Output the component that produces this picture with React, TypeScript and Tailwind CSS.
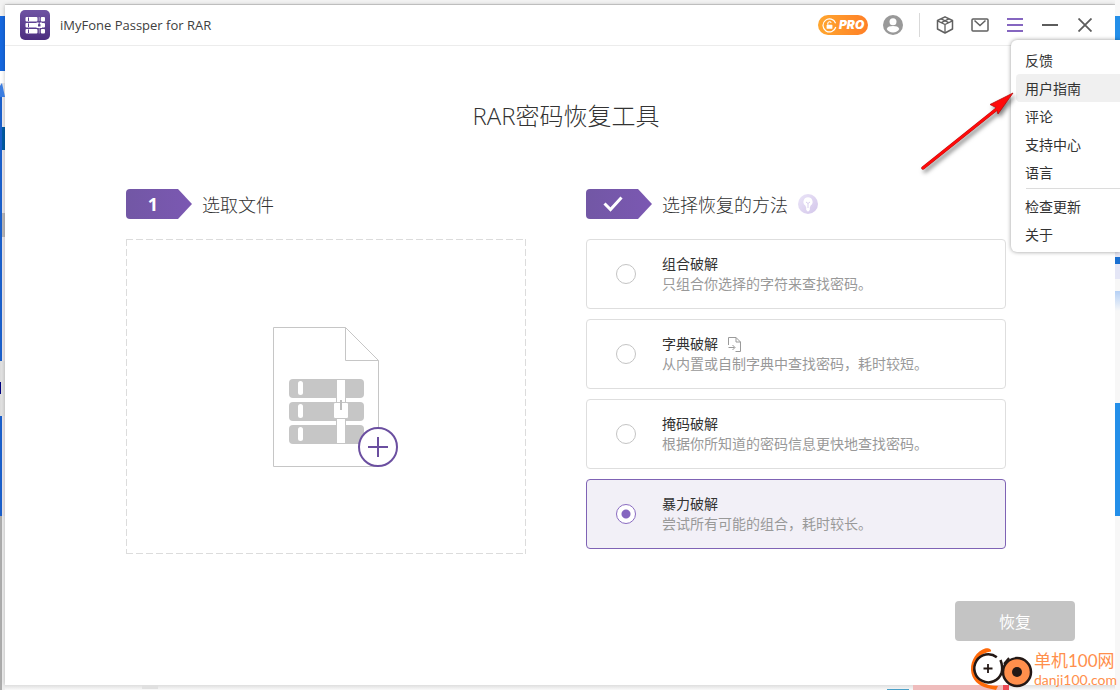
import { useState, type ReactNode } from "react";

type Method = { id: string; title: string; desc: string; importable?: boolean };

const methods: Method[] = [
  { id: "combo", title: "组合破解", desc: "只组合你选择的字符来查找密码。" },
  { id: "dict", title: "字典破解", desc: "从内置或自制字典中查找密码，耗时较短。", importable: true },
  { id: "mask", title: "掩码破解", desc: "根据你所知道的密码信息更快地查找密码。" },
  { id: "brute", title: "暴力破解", desc: "尝试所有可能的组合，耗时较长。" },
];

function AppLogo() {
  return (
    <svg width="30" height="30" viewBox="0 0 30 30" aria-hidden="true">
      <defs>
        <linearGradient id="logoBg" x1="0" y1="0" x2="0" y2="1">
          <stop offset="0" stopColor="#6f53a3" />
          <stop offset="1" stopColor="#4b2d7f" />
        </linearGradient>
      </defs>
      <rect width="30" height="30" rx="5" fill="url(#logoBg)" />
      <g fill="#fff">
        {[7, 13, 19].map((y) => (
          <g key={y}>
            <rect x="5.5" y={y} width="12" height="4.400" rx="1" />
            <rect x="20.800" y={y} width="4.200" height="4.400" rx="1" />
            <rect x="8" y={y + 0.4} width="1" height="3.600" fill="#5c4091" />
          </g>
        ))}
      </g>
      <path d="M16.500 12.500h5.500v5.500h-5.500z" fill="#fff" />
      <path d="M18 14.200h2.500v2.300H18z" fill="#5c4091" />
      <path d="M18.700 12h1v3h-1z" fill="#5c4091" />
      <path d="M18.700 18h1v5.400h-1zM18.700 7h1v4h-1z" fill="#fff" opacity="0.5" />
    </svg>
  );
}

function ToolButton({ label, children, onClick, expanded }: { label: string; children: ReactNode; onClick?: () => void; expanded?: boolean }) {
  return (
    <button type="button" aria-label={label} aria-expanded={expanded} onClick={onClick} className="flex h-10 w-[35px] items-center justify-center">
      {children}
    </button>
  );
}

function Header({ menuOpen, onMenu }: { menuOpen: boolean; onMenu: () => void }) {
  return (
    <header className="flex h-[41px] items-center border-b border-[#ececec] pr-[13px] pl-[15px]">
      <AppLogo />
      <h1 className="ml-2.5 pt-0.5 text-[13px] text-[#404040]">iMyFone Passper for RAR</h1>
      <div className="ml-auto flex items-center">
        <button type="button" aria-label="升级" className="flex h-5 w-[50px] items-center gap-0.5 rounded-full bg-linear-to-r from-[#ffa62e] to-[#ff7f27] pl-1">
          <svg width="15" height="15" viewBox="0 0 15 15" aria-hidden="true">
            <path d="M13.6 5.2A6.5 6.5 0 1 0 13.8 9" fill="none" stroke="#fff" strokeWidth="1.2" />
            <rect x="4.6" y="6.8" width="5.8" height="4" rx="0.6" fill="#fff" />
            <path d="M5.8 6.8V5.4a1.8 1.8 0 0 1 3.4-.6" fill="none" stroke="#fff" strokeWidth="1.1" />
          </svg>
          <span className="font-['Inter',sans-serif] text-xs font-black text-white italic">PRO</span>
        </button>
        <button type="button" aria-label="账户" className="ml-[15px]">
          <svg width="20" height="20" viewBox="0 0 20 20" className="block" aria-hidden="true">
            <circle cx="10" cy="10" r="10" fill="#999" />
            <circle cx="10" cy="6.800" r="3.500" fill="#fff" />
            <path d="M3.700 14c.8-2.400 3.200-3 6.300-3s5.500.600 6.300 3C15.200 16.300 12.800 17.500 10 17.500S4.800 16.300 3.700 14Z" fill="#fff" />
          </svg>
        </button>
        <span className="mr-[7px] ml-4 h-6 w-px bg-[#d9d9d9]" />
        <ToolButton label="产品">
          <svg width="18" height="20" viewBox="0 0 18 20" fill="none" stroke="#606060" strokeWidth="1.5" strokeLinejoin="round" aria-hidden="true">
            <path d="M9 1.800 16.500 5.500v8.500L9 18 1.500 14V5.500Z" />
            <path d="M1.500 5.800 9 9.500l7.500-3.700M9 9.500V18M5.200 3.800 12.700 7.600M12.800 3.800 5.300 7.600" strokeWidth="1.300" />
          </svg>
        </ToolButton>
        <ToolButton label="邮件">
          <svg width="18" height="14" viewBox="0 0 18 14" fill="none" stroke="#606060" strokeWidth="1.5" aria-hidden="true">
            <rect x="1" y="1" width="16" height="12" rx="1" />
            <path d="m3.500 2.500 5.500 5 5.500-5" />
          </svg>
        </ToolButton>
        <ToolButton label="菜单" onClick={onMenu} expanded={menuOpen}>
          <svg width="16" height="14" viewBox="0 0 16 14" fill="#8566c0" aria-hidden="true">
            <path d="M0 0h16v2H0zM0 6h16v2H0zM0 12h16v2H0z" />
          </svg>
        </ToolButton>
        <ToolButton label="最小化">
          <svg width="16" height="2" viewBox="0 0 16 2" aria-hidden="true">
            <path d="M0 0h16v2H0z" fill="#5c5c5c" />
          </svg>
        </ToolButton>
        <ToolButton label="关闭">
          <svg width="14" height="14" viewBox="0 0 14 14" stroke="#5c5c5c" strokeWidth="1.800" aria-hidden="true">
            <path d="m.5.500 13 13M13.500.500l-13 13" />
          </svg>
        </ToolButton>
      </div>
    </header>
  );
}

function StepTitle({ badge, children }: { badge: ReactNode; children: ReactNode }) {
  return (
    <div className="flex h-[30px] items-center gap-2.5">
      <span className="flex h-[30px] w-[66px] items-center justify-center rounded-sm bg-linear-to-r from-[#7257a5] to-[#7b58b2] pr-3 text-lg font-bold text-white [clip-path:polygon(0_0,52px_0,100%_50%,52px_100%,0_100%)]">
        {badge}
      </span>
      {children}
    </div>
  );
}

function DropIcon() {
  return (
    <svg width="146" height="142" viewBox="0 0 146 142" aria-hidden="true">
      <path d="M20.500 1.500h72l33 33v106h-105ZM92.500 1.500v33h33" fill="#fff" stroke="#c6c6c6" />
      {[53, 76, 99].map((y) => (
        <g key={y}>
          <rect x="36" y={y} width="75" height="19" rx="4" fill="#c6c6c6" />
          <rect x="45" y={y + 2} width="5" height="14" rx="2.500" fill="#fff" />
        </g>
      ))}
      <rect x="83.500" y="53.500" width="9" height="64" fill="#fff" stroke="#c6c6c6" />
      <rect x="80.500" y="76.500" width="15" height="16" rx="1.500" fill="#fff" stroke="#c6c6c6" />
      <rect x="87" y="74" width="2" height="10" fill="#bdbdbd" />
      <circle cx="125" cy="121" r="19" fill="#fff" stroke="#6b4fa0" strokeWidth="2" />
      <path d="M115 121h20M125 111v20" stroke="#6b4fa0" strokeWidth="2" />
    </svg>
  );
}

function MethodCard({ method, checked, onSelect }: { method: Method; checked: boolean; onSelect: () => void }) {
  return (
    <label className="flex h-[70px] items-center gap-[26px] rounded-[4px] border border-[#dedede] bg-white pl-[29px] text-sm/5 has-checked:border-[#7f63b5] has-checked:bg-[#f2f0f7]">
      <input
        type="radio"
        name="method"
        checked={checked}
        onChange={onSelect}
        className="size-5 shrink-0 appearance-none rounded-full border border-[#c4c4c4] bg-white checked:border-[#8a6bc1] checked:bg-[radial-gradient(circle,#8566c0_4px,#fff_5px)]"
      />
      <span className="flex flex-col">
        <span className="flex items-center gap-2.5 text-[#333]">
          {method.title}
          {method.importable && (
            <svg width="13" height="15" viewBox="0 0 13 15" fill="none" stroke="#9a9a9a" aria-hidden="true">
              <path d="M.5 8V.500h7.500L12.500 5v9.500H7.500M8 .500V5h4.500M.5 10.500h6M4.500 8l2.500 2.500L4.500 13" />
            </svg>
          )}
        </span>
        <span className="text-[#999]">{method.desc}</span>
      </span>
    </label>
  );
}

function Menu() {
  const item = "flex h-7 w-full items-center rounded-l-[4px] pt-0.5 pl-[9px] text-left hover:bg-[#f0f0f0]";
  return (
    <nav className="absolute top-10 right-0 w-[109px] rounded-l-[6px] bg-white pt-1.5 pb-1 pl-[5px] text-sm text-[#333] shadow-[0_0_4px_rgba(0,0,0,0.4)]">
      <button type="button" className={item}>反馈</button>
      <button type="button" className="flex h-7 w-full items-center rounded-l-[4px] bg-[#f0f0f0] pt-0.5 pl-[9px] text-left">用户指南</button>
      <button type="button" className={item}>评论</button>
      <button type="button" className={item}>支持中心</button>
      <button type="button" className={item}>语言</button>
      <hr className="mt-0.5 mb-[3px] ml-2.5 border-[#dcdcdc]" />
      <button type="button" className={item}>检查更新</button>
      <button type="button" className={item}>关于</button>
    </nav>
  );
}

function Watermark() {
  return (
    <div className="absolute right-[3px] bottom-0 flex items-end font-['Lato','Noto_Sans_CJK_SC',sans-serif] text-[#ff8f4c]">
      <svg width="64" height="43" viewBox="0 0 64 43" aria-hidden="true">
        <path d="M21 4.500C22 2 18 .500 15 1.500 7 4 .500 13 1 23c.500 10 8 16 16 18l9 2 2-4C15 39 5 33 4.500 22.500 4 13 11 5.500 21 4.500Z" fill="#ff6a0a" />
        <path d="M26.800 10.200A14 14 0 1 0 31.500 26" fill="#fff" stroke="#231815" strokeWidth="2.500" />
        <path d="M31.500 26c1.500-5 .500-9-1-13" fill="none" stroke="#231815" strokeWidth="2.500" />
        <path d="M13.500 21.500h9M18 17v9" stroke="#231815" strokeWidth="1.800" />
        <circle cx="47" cy="25" r="14" fill="#ff8f4c" stroke="#231815" strokeWidth="2.500" />
        <circle cx="47" cy="25" r="5" fill="#231815" />
        <path d="M35 14c3-3 6-4.500 10-5" stroke="#fff" strokeWidth="2.500" fill="none" />
        <path d="m34 17 5-6" stroke="#231815" strokeWidth="2" />
      </svg>
      <div className="flex flex-col pb-0.5">
        <span className="text-[17px]/5">单机100网</span>
        <span className="text-sm/[17px]">danji100.com</span>
      </div>
    </div>
  );
}

function LeftEdge() {
  return (
    <div className="flex w-[5px] shrink-0 flex-col bg-[#ececef]" aria-hidden="true">
      <i className="h-4 bg-[#f2f2f2]" />
      <i className="h-[55px] bg-[#1668df]" />
      <i className="h-3 bg-white" />
      <i className="h-3.5 bg-[#3b7de0] [clip-path:polygon(0_20%,40%_0,100%_100%,0_100%)]" />
      <i className="h-[30px] border-l-2 border-[#1b60cb] bg-[#efecef]" />
      <i className="h-[23px] border-l-2 border-[#1b60cb] bg-[#005da6]" />
      <i className="h-[63px] border-l-2 border-[#1b60cb] bg-[#ebe7eb]" />
      <i className="h-6 border-l-2 border-[#1b60cb] bg-[#bcb9bc]" />
      <i className="h-[124px] border-l-2 border-[#1b60cb] bg-[#ebe7eb]" />
      <i className="h-[21px] border-l border-[#ddd] bg-[#e2e2e2]" />
      <i className="h-3 border-l border-[#000080] bg-[#e2e2e2]" />
      <i className="h-[22px] border-l border-[#ddd] bg-[#e2e2e2]" />
      <i className="h-[100px] border-l-2 border-[#1b60cb] bg-[#ebe7eb]" />
      <i className="flex-1 border-l-2 border-[#acacac] bg-[#eee]" />
    </div>
  );
}

function RightEdge() {
  return (
    <div className="flex w-[5px] shrink-0 flex-col bg-[#f7f7f7]" aria-hidden="true">
      <i className="h-4" />
      <i className="h-[100px] bg-[#248fe9]" />
      <i className="h-[141px] bg-[#e6e6f2]" />
      <i className="h-[7px] bg-[#1a70d2]" />
      <i className="h-[15px] bg-[#e4e6f6]" />
      <i className="h-3" />
      <i className="h-5 bg-linear-to-b from-[#b5d0f5] to-[#f7f7f7]" />
      <i className="h-[92px]" />
      <i className="h-[113px] bg-[#248fe9]" />
    </div>
  );
}

function BottomEdge() {
  return (
    <div className="flex h-[5px] shrink-0 bg-linear-to-b from-[#dedede] to-[#fafafa]" aria-hidden="true">
      <i className="ml-[137px] h-1 w-4 bg-[#e0e0e0]" />
      <i className="ml-auto h-[5px] w-[22px] border-b border-[#4aa0c8]" />
      <i className="ml-1 w-[90px] bg-[#efbcbc]" />
      <i className="mr-[106px] w-1.5 bg-[#ee4b55]" />
    </div>
  );
}

export default function App() {
  const [selected, setSelected] = useState("brute");
  const [menuOpen, setMenuOpen] = useState(true);
  return (
    <div className="relative flex min-h-screen overflow-hidden font-['Open_Sans','Noto_Sans_CJK_SC',sans-serif]">
      <LeftEdge />
      <div className="flex min-w-0 flex-1 flex-col">
        <div className="h-[5px] shrink-0 border-b border-[#d4d4d4] bg-[#f3f3f3]" />
        <div className="flex flex-1 flex-col bg-white shadow-[0_0_4px_rgba(0,0,0,0.25)]">
          <Header menuOpen={menuOpen} onMenu={() => setMenuOpen(!menuOpen)} />
          <main className="flex flex-1 flex-col pt-[54px] pr-[109px] pl-[121px]">
            <h2 className="text-center font-['Open_Sans','Noto_Sans_CJK_SC_Light','Noto_Sans_CJK_SC',sans-serif] text-2xl/8 font-light text-[#333]">RAR密码恢复工具</h2>
            <div className="mt-[57px] grid grid-cols-[20fr_21fr] gap-[60px]">
              <section className="flex flex-col gap-5">
                <StepTitle badge="1">
                  <h3 className="pt-0.5 text-lg font-light text-[#333]">选取文件</h3>
                </StepTitle>
                <button
                  type="button"
                  aria-label="添加文件"
                  className="flex h-[315px] items-center justify-center bg-[linear-gradient(90deg,#dcdcdc_70%,transparent_70%),linear-gradient(90deg,#dcdcdc_70%,transparent_70%),linear-gradient(#dcdcdc_70%,transparent_70%),linear-gradient(#dcdcdc_70%,transparent_70%)] bg-[length:10px_1px,10px_1px,1px_10px,1px_10px] bg-[position:left_top,left_bottom,left_top,right_top] [background-repeat:repeat-x,repeat-x,repeat-y,repeat-y]"
                >
                  <DropIcon />
                </button>
              </section>
              <section className="flex flex-col gap-5">
                <StepTitle
                  badge={
                    <svg width="20" height="16" viewBox="0 0 20 16" fill="none" stroke="#fff" strokeWidth="3" aria-label="完成">
                      <path d="m1.500 7.500 6 6L18.500 1.500" />
                    </svg>
                  }
                >
                  <h3 className="pt-0.5 text-lg font-light text-[#333]">选择恢复的方法</h3>
                  <button type="button" aria-label="提示">
                    <svg width="20" height="20" viewBox="0 0 20 20" className="block" aria-hidden="true">
                      <defs>
                        <linearGradient id="tipBg" x1="0" y1="0" x2="1" y2="1">
                          <stop offset="0" stopColor="#ebe5f8" />
                          <stop offset="1" stopColor="#d3c6ea" />
                        </linearGradient>
                      </defs>
                      <circle cx="10" cy="10" r="10" fill="url(#tipBg)" />
                      <path d="M10 3.200a4.600 4.600 0 0 0-2.700 8.300l.9 1.900v2.600L10 17.800l1.800-1.800v-2.600l.9-1.900A4.600 4.600 0 0 0 10 3.200Z" fill="#fff" />
                      <path d="M8 8 10 9.500 12 8M10 9.500V14" stroke="#d9cfee" fill="none" />
                    </svg>
                  </button>
                </StepTitle>
                <div className="flex flex-col gap-2.5">
                  {methods.map((m) => (
                    <MethodCard key={m.id} method={m} checked={selected === m.id} onSelect={() => setSelected(m.id)} />
                  ))}
                </div>
              </section>
            </div>
          </main>
          <footer className="flex justify-end pr-10 pb-11">
            <button type="button" className="h-10 w-[120px] rounded-[4px] bg-[#c4c4c4] pt-0.5 text-base text-white">恢复</button>
          </footer>
        </div>
        <BottomEdge />
      </div>
      <RightEdge />
      {menuOpen && <Menu />}
      <svg width="106" height="90" viewBox="0 0 106 90" className="pointer-events-none absolute top-[88px] right-[100px] drop-shadow-[2px_3px_2px_rgba(0,0,0,0.5)]" aria-hidden="true">
        <path d="M9 80 84 20" stroke="#b50b0b" strokeWidth="3.500" strokeLinecap="round" />
        <path d="M99 5 76 16.500l6 3 2 6.500Z" fill="#ff0a0a" stroke="#b50b0b" strokeWidth="0.800" />
        <path d="M9 80 84 20" stroke="#ff0a0a" strokeWidth="2.500" strokeLinecap="round" />
      </svg>
      <Watermark />
    </div>
  );
}
